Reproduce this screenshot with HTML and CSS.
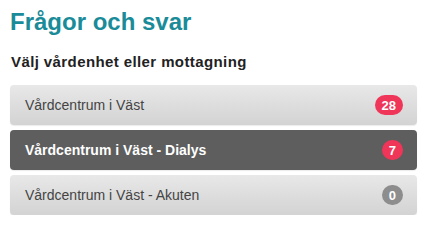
FILE: index.html
```html
<!DOCTYPE html>
<html lang="sv">
<head>
<meta charset="utf-8">
<title>Frågor och svar</title>
<link rel="stylesheet" href="styles.css">
</head>
<body>
<main class="page">
  <h1 class="title">Frågor och svar</h1>
  <h2 class="subtitle">Välj vårdenhet eller mottagning</h2>
  <ul class="units">
    <li class="unit"><span class="unit-name">Vårdcentrum i Väst</span><span class="badge badge-red">28</span></li>
    <li class="unit unit-active"><span class="unit-name">Vårdcentrum i Väst - Dialys</span><span class="badge badge-red">7</span></li>
    <li class="unit"><span class="unit-name">Vårdcentrum i Väst - Akuten</span><span class="badge badge-gray">0</span></li>
  </ul>
</main>
</body>
</html>
```
FILE: styles.css
```css
html, body {
  margin: 0;
  padding: 0;
  background: #ffffff;
}
body {
  font-family: "Liberation Sans", Arial, Helvetica, sans-serif;
}
.page {
  padding: 8px 13px 0 10px;
}
.title {
  margin: 0;
  font-size: 24px;
  line-height: 28px;
  font-weight: bold;
  color: #1a8b98;
}
.subtitle {
  margin: 17px 0 0 1px;
  font-size: 15px;
  line-height: 18px;
  font-weight: bold;
  letter-spacing: 0.4px;
  color: #222222;
}
.units {
  list-style: none;
  margin: 14px 0 0 0;
  padding: 0;
  display: flex;
  flex-direction: column;
  gap: 5px;
}
.unit {
  height: 40px;
  box-sizing: border-box;
  display: flex;
  align-items: center;
  justify-content: space-between;
  padding: 0 14px 0 15px;
  border-radius: 4px;
  background: linear-gradient(to bottom, #e8e8e8 0%, #d3d3d3 100%);
  box-shadow: 0 1px 1px rgba(0, 0, 0, 0.08);
  color: #444444;
  font-size: 14px;
}
.unit-active {
  background: #5e5e5e;
  color: #ffffff;
  font-weight: bold;
}
.badge {
  display: inline-flex;
  align-items: center;
  justify-content: center;
  min-width: 20px;
  height: 20px;
  box-sizing: border-box;
  padding: 0 7px;
  border-radius: 10px;
  color: #ffffff;
  font-size: 13px;
  font-weight: bold;
  letter-spacing: 0;
}
.badge-red {
  background: #ef3558;
}
.badge-gray {
  background: #8d8d8d;
}
```
